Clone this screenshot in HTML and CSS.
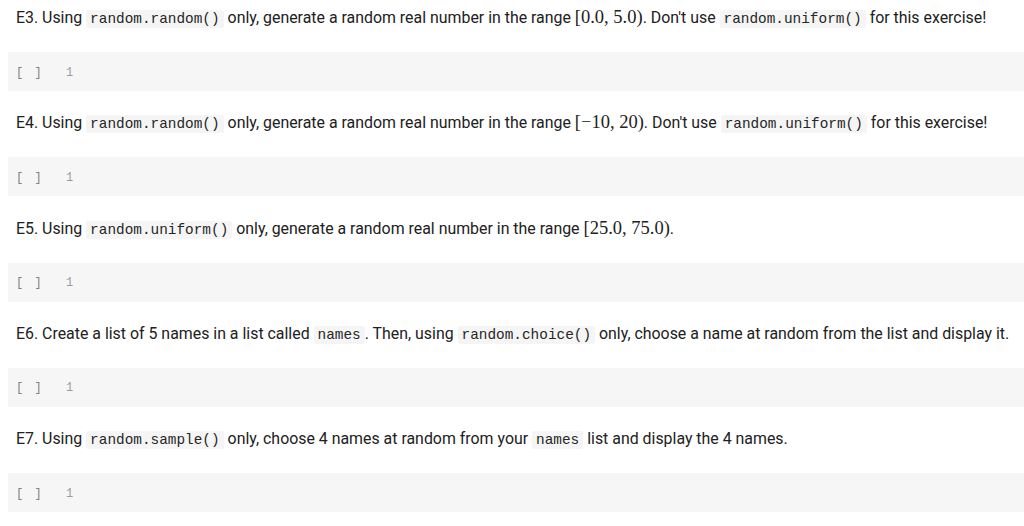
FILE: index.html
```html
<!DOCTYPE html>
<html>
<head>
<meta charset="utf-8">
<link rel="stylesheet" href="styles.css">
</head>
<body>
<div class="notebook">
  <section class="exercise">
    <div class="md">E3. Using <code>random.random()</code> only, generate a random real number in the range <span class="math">[0.0, 5.0)</span>. Don't use <code>random.uniform()</code> for this exercise!</div>
    <div class="cell"><span class="prompt">[ ]</span><span class="lineno">1</span></div>
  </section>
  <section class="exercise">
    <div class="md">E4. Using <code>random.random()</code> only, generate a random real number in the range <span class="math">[−10, 20)</span>. Don't use <code>random.uniform()</code> for this exercise!</div>
    <div class="cell"><span class="prompt">[ ]</span><span class="lineno">1</span></div>
  </section>
  <section class="exercise">
    <div class="md">E5. Using <code>random.uniform()</code> only, generate a random real number in the range <span class="math">[25.0, 75.0)</span>.</div>
    <div class="cell"><span class="prompt">[ ]</span><span class="lineno">1</span></div>
  </section>
  <section class="exercise">
    <div class="md">E6. Create a list of 5 names in a list called <code>names</code>. Then, using <code>random.choice()</code> only, choose a name at random from the list and display it.</div>
    <div class="cell"><span class="prompt">[ ]</span><span class="lineno">1</span></div>
  </section>
  <section class="exercise">
    <div class="md">E7. Using <code>random.sample()</code> only, choose 4 names at random from your <code>names</code> list and display the 4 names.</div>
    <div class="cell"><span class="prompt">[ ]</span><span class="lineno">1</span></div>
  </section>
</div>
</body>
</html>
```

FILE: styles.css
```css
html, body {
  margin: 0;
  padding: 0;
  background: #ffffff;
}
body {
  font-family: Roboto, "Liberation Sans", sans-serif;
  color: #212121;
  overflow: hidden;
}
.notebook {
  padding-left: 8px;
}
.exercise {
  display: flex;
  flex-direction: column;
  margin-bottom: 14.3px;
}
.md {
  box-sizing: content-box;
  height: 24px;
  padding: 6px 8px 0 8px;
  font-size: 15.9px;
  line-height: 24px;
  white-space: nowrap;
  margin-bottom: 22px;
}
code {
  font-family: "Liberation Mono", monospace;
  font-size: 14.4px;
  line-height: 17px;
  background: #f5f5f5;
  padding: 1px 4px;
  border-radius: 2px;
  color: #262626;
}
.math {
  font-family: "Liberation Serif", serif;
  font-size: 18.5px;
  line-height: 20px;
}
.cell {
  height: 39px;
  background: #f6f6f6;
  display: flex;
  align-items: center;
  padding-left: 8px;
  padding-top: 2px;
  box-sizing: border-box;
}
.prompt {
  font-family: "Liberation Mono", monospace;
  font-size: 12px;
  letter-spacing: 2px;
  color: #7f7f7f;
  width: 50px;
}
.lineno {
  font-family: "Liberation Mono", monospace;
  font-size: 12px;
  color: #9a9a9a;
}
```
